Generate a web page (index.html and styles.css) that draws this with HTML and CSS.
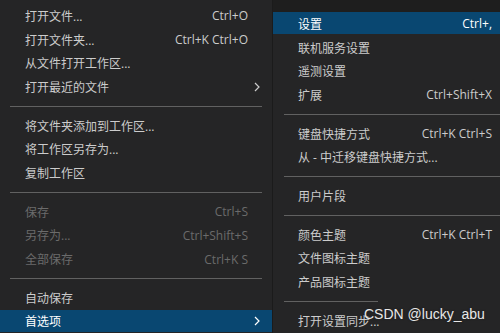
FILE: index.html
```html
<!DOCTYPE html>
<html lang="zh">
<head>
    <meta charset="UTF-8">
    <title>首选项</title>
    <link rel="stylesheet" href="styles.css">
</head>
<body>
    <div class="screen">
        <div class="menu main">
            <div class="item"><span class="label">打开文件...</span><span class="key">Ctrl+O</span><span class="arrow"></span></div>
            <div class="item"><span class="label">打开文件夹...</span><span class="key">Ctrl+K Ctrl+O</span><span class="arrow"></span></div>
            <div class="item"><span class="label">从文件打开工作区...</span><span class="arrow"></span></div>
            <div class="item"><span class="label">打开最近的文件</span><span class="arrow"><svg width="6" height="10" viewBox="0 0 6 10"><path d="M1 1 L5 5 L1 9" fill="none" stroke="#cccccc" stroke-width="1.2"/></svg></span></div>
            <div class="sep"></div>
            <div class="item"><span class="label">将文件夹添加到工作区...</span><span class="arrow"></span></div>
            <div class="item"><span class="label">将工作区另存为...</span><span class="arrow"></span></div>
            <div class="item"><span class="label">复制工作区</span><span class="arrow"></span></div>
            <div class="sep"></div>
            <div class="item disabled"><span class="label">保存</span><span class="key">Ctrl+S</span><span class="arrow"></span></div>
            <div class="item disabled"><span class="label">另存为...</span><span class="key">Ctrl+Shift+S</span><span class="arrow"></span></div>
            <div class="item disabled"><span class="label">全部保存</span><span class="key">Ctrl+K S</span><span class="arrow"></span></div>
            <div class="sep"></div>
            <div class="item"><span class="label">自动保存</span><span class="arrow"></span></div>
            <div class="item active"><span class="label">首选项</span><span class="arrow"><svg width="6" height="10" viewBox="0 0 6 10"><path d="M1 1 L5 5 L1 9" fill="none" stroke="#ffffff" stroke-width="1.2"/></svg></span></div>
        </div>

        <div class="side">
            <div class="side-top"></div>
            <div class="menu sub">
                <div class="item active"><span class="label">设置</span><span class="key">Ctrl+,</span><span class="arrow"></span></div>
                <div class="item"><span class="label">联机服务设置</span><span class="arrow"></span></div>
                <div class="item"><span class="label">遥测设置</span><span class="arrow"></span></div>
                <div class="item"><span class="label">扩展</span><span class="key">Ctrl+Shift+X</span><span class="arrow"></span></div>
                <div class="sep"></div>
                <div class="item"><span class="label">键盘快捷方式</span><span class="key">Ctrl+K Ctrl+S</span><span class="arrow"></span></div>
                <div class="item"><span class="label">从 - 中迁移键盘快捷方式...</span><span class="arrow"></span></div>
                <div class="sep"></div>
                <div class="item"><span class="label">用户片段</span><span class="arrow"></span></div>
                <div class="sep"></div>
                <div class="item"><span class="label">颜色主题</span><span class="key">Ctrl+K Ctrl+T</span><span class="arrow"></span></div>
                <div class="item"><span class="label">文件图标主题</span><span class="arrow"></span></div>
                <div class="item"><span class="label">产品图标主题</span><span class="arrow"></span></div>
                <div class="sep short"></div>
                <div class="item"><span class="label">打开设置同步...</span><span class="arrow"></span></div>
            </div>
        </div>

        <div class="watermark">CSDN @lucky_abu</div>
    </div>
</body>
</html>
```

FILE: styles.css
```css
body {
    margin: 0;
    background-color: #1e1e1e;
    font-family: "Open Sans", "Noto Sans CJK SC", sans-serif;
    font-size: 12px;
    color: #cccccc;
}

.screen {
    position: relative;
    display: flex;
    width: 500px;
    height: 333px;
    overflow: hidden;
}

.menu {
    background-color: #252526;
    display: flex;
    flex-direction: column;
}

.main {
    width: 272px;
    flex-shrink: 0;
    padding-top: 4px;
}

.side {
    width: 243px;
    flex-shrink: 0;
    border-left: 1px solid #1b1b1b;
    display: flex;
    flex-direction: column;
}

.side-top {
    height: 12px;
    background-color: #1e1e1e;
}

.sub {
    flex: 1;
}

.item {
    height: 23.7px;
    display: flex;
    align-items: center;
    padding-left: 25px;
    white-space: nowrap;
    flex-shrink: 0;
}

.label {
    flex: 1;
}

.key {
    text-align: right;
}

.arrow {
    width: 24px;
    display: flex;
    align-items: center;
    padding-left: 6px;
    box-sizing: border-box;
}

.item.active {
    color: #ffffff;
    background: linear-gradient(#094771, #094771) top / 100% 22px no-repeat;
}

.item.disabled {
    color: #6b6b6b;
}

.sep {
    height: 15px;
    flex-shrink: 0;
    position: relative;
}

.sep::after {
    content: "";
    position: absolute;
    left: 10px;
    right: 10px;
    top: 7px;
    height: 1px;
    background-color: #616161;
}

.sub .sep::after {
    left: 11px;
    right: 0;
}

.sub .sep.short::after {
    width: 94px;
    right: auto;
}

.watermark {
    position: absolute;
    left: 364px;
    top: 306px;
    font-family: "Liberation Sans", sans-serif;
    font-size: 14px;
    color: #e8e8e8;
    text-shadow: 0 0 2px #1e1e1e;
}
```
